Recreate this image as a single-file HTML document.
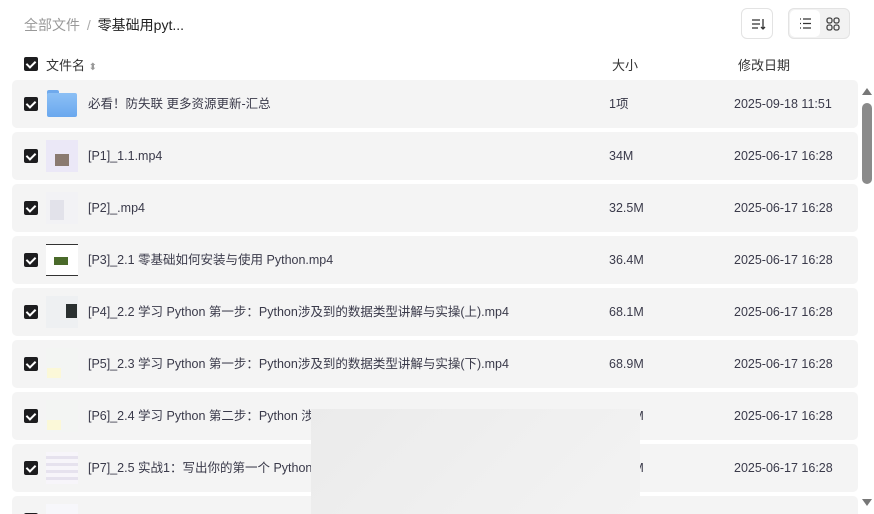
<!DOCTYPE html>
<html><head><meta charset="utf-8"><style>
*{margin:0;padding:0;box-sizing:border-box}
html,body{width:874px;height:514px;overflow:hidden}
body{background:#fff;font-family:"Liberation Sans","Noto Sans CJK SC",sans-serif;position:relative;color:#333}
.abs{position:absolute}
.cb{position:absolute;width:14px;height:14px;background:#1d1d1f;border-radius:2px}
.cb:after{content:"";position:absolute;left:4px;top:2px;width:4px;height:7px;border:solid #fff;border-width:0 2px 2px 0;transform:rotate(45deg)}
.row{position:absolute;left:12px;width:846px;height:48px;background:#f4f4f4;border-radius:5px;overflow:hidden}
.row .cb{left:12px;top:17px}
.row .th{position:absolute;left:34px;top:8px;width:32px;height:32px;background:#f7f7fb}
.row .nm,.row .sz,.row .dt{position:absolute;top:0;height:48px;line-height:48px;font-size:12.5px;color:#3a3a4a;white-space:nowrap}
.row .nm{left:76px}
.row .sz{left:597px}
.row .dt{left:722px}
</style></head><body>
<div class="abs" style="left:24px;top:15px;font-size:14px;color:#999">全部文件 <span style="color:#aaa;margin:0 3px">/</span> <span style="color:#222">零基础用pyt...</span></div>
<div class="abs" style="left:741px;top:8px;width:32px;height:31px;border:1px solid #e3e3e3;border-radius:6px;background:#fff">
<svg width="32" height="31" viewBox="0 0 32 31"><path d="M10 11h8M10 15h8M10 19h6M21 10v10M19 18l2 2 2-2" stroke="#333" stroke-width="1.3" fill="none"/></svg></div>
<div class="abs" style="left:788px;top:8px;width:62px;height:31px;border:1px solid #e3e3e3;border-radius:6px;background:#f2f2f2">
<div class="abs" style="left:1px;top:1px;width:30px;height:27px;background:#fff;border-radius:5px">
<svg width="30" height="27"><path d="M10 9h1M13 9h8M10 13.5h1M13 13.5h8M10 18h1M13 18h8" stroke="#333" stroke-width="1.3"/></svg></div>
<svg class="abs" style="left:37px;top:8px" width="14" height="14"><g fill="none" stroke="#444" stroke-width="1.3"><rect x="1" y="1" width="5" height="5" rx="2"/><rect x="8" y="1" width="5" height="5" rx="2"/><rect x="1" y="8" width="5" height="5" rx="2"/><rect x="8" y="8" width="5" height="5" rx="2"/></g></svg>
</div>
<div class="cb" style="left:24px;top:57px"></div>
<div class="abs" style="left:46px;top:55px;font-size:13px;color:#333">文件名 <span style="font-size:10px;color:#999">⬍</span></div>
<div class="abs" style="left:612px;top:55px;font-size:13px;color:#333">大小</div>
<div class="abs" style="left:738px;top:55px;font-size:13px;color:#333">修改日期</div>

<div class="row" style="top:80px"><div class="cb"></div><div class="th" style="background:none"><div class="abs" style="left:1px;top:2px;width:12px;height:5px;background:#6fa9ec;border-radius:2px 2px 0 0"></div><div class="abs" style="left:1px;top:5px;width:30px;height:24px;background:linear-gradient(#8cc0f5,#6aa8ee);border-radius:2px"></div></div><div class="nm">必看！防失联 更多资源更新-汇总</div><div class="sz">1项</div><div class="dt">2025-09-18 11:51</div></div>
<div class="row" style="top:132px"><div class="cb"></div><div class="th" style="background:#ebe8f7"><div class="abs" style="left:9px;top:14px;width:14px;height:12px;background:#8a7a70"></div></div><div class="nm">[P1]_1.1.mp4</div><div class="sz">34M</div><div class="dt">2025-06-17 16:28</div></div>
<div class="row" style="top:184px"><div class="cb"></div><div class="th" style="background:#f2f2f5"><div class="abs" style="left:4px;top:8px;width:14px;height:20px;background:#e2e2ea"></div></div><div class="nm">[P2]_.mp4</div><div class="sz">32.5M</div><div class="dt">2025-06-17 16:28</div></div>
<div class="row" style="top:236px"><div class="cb"></div><div class="th" style="background:#fff;border-top:1px solid #333;border-bottom:1px solid #333"><div class="abs" style="left:8px;top:12px;width:14px;height:8px;background:#4a6a2a"></div></div><div class="nm">[P3]_2.1 零基础如何安装与使用 Python.mp4</div><div class="sz">36.4M</div><div class="dt">2025-06-17 16:28</div></div>
<div class="row" style="top:288px"><div class="cb"></div><div class="th" style="background:#eef0f2"><div class="abs" style="left:20px;top:8px;width:11px;height:14px;background:#2a3030"></div></div><div class="nm">[P4]_2.2 学习 Python 第一步：Python涉及到的数据类型讲解与实操(上).mp4</div><div class="sz">68.1M</div><div class="dt">2025-06-17 16:28</div></div>
<div class="row" style="top:340px"><div class="cb"></div><div class="th" style="background:#f3f5f3"><div class="abs" style="left:1px;top:20px;width:14px;height:10px;background:#fbf8d8"></div></div><div class="nm">[P5]_2.3 学习 Python 第一步：Python涉及到的数据类型讲解与实操(下).mp4</div><div class="sz">68.9M</div><div class="dt">2025-06-17 16:28</div></div>
<div class="row" style="top:392px"><div class="cb"></div><div class="th" style="background:#f3f5f3"><div class="abs" style="left:1px;top:20px;width:14px;height:10px;background:#fbf8d8"></div></div><div class="nm">[P6]_2.4 学习 Python 第二步：Python 涉</div><div class="sz">68.0M</div><div class="dt">2025-06-17 16:28</div></div>
<div class="row" style="top:444px"><div class="cb"></div><div class="th" style="background:repeating-linear-gradient(#f7f5fa 0 4px,#e6e2ee 4px 7px)"></div><div class="nm">[P7]_2.5 实战1：写出你的第一个 Python</div><div class="sz">50.0M</div><div class="dt">2025-06-17 16:28</div></div>
<div class="row" style="top:496px;height:18px;border-radius:5px 5px 0 0"><div class="cb"></div><div class="th"></div></div>
<div class="abs" style="left:311px;top:409px;width:329px;height:105px;background:linear-gradient(135deg,#ebebeb,#f3f3f3)"></div>
<div class="abs" style="left:862px;top:88px;width:0;height:0;border-left:5px solid transparent;border-right:5px solid transparent;border-bottom:7px solid #777"></div>
<div class="abs" style="left:862px;top:103px;width:10px;height:81px;background:#8a8a8a;border-radius:5px"></div>
<div class="abs" style="left:862px;top:499px;width:0;height:0;border-left:5px solid transparent;border-right:5px solid transparent;border-top:7px solid #777"></div>
</body></html>
